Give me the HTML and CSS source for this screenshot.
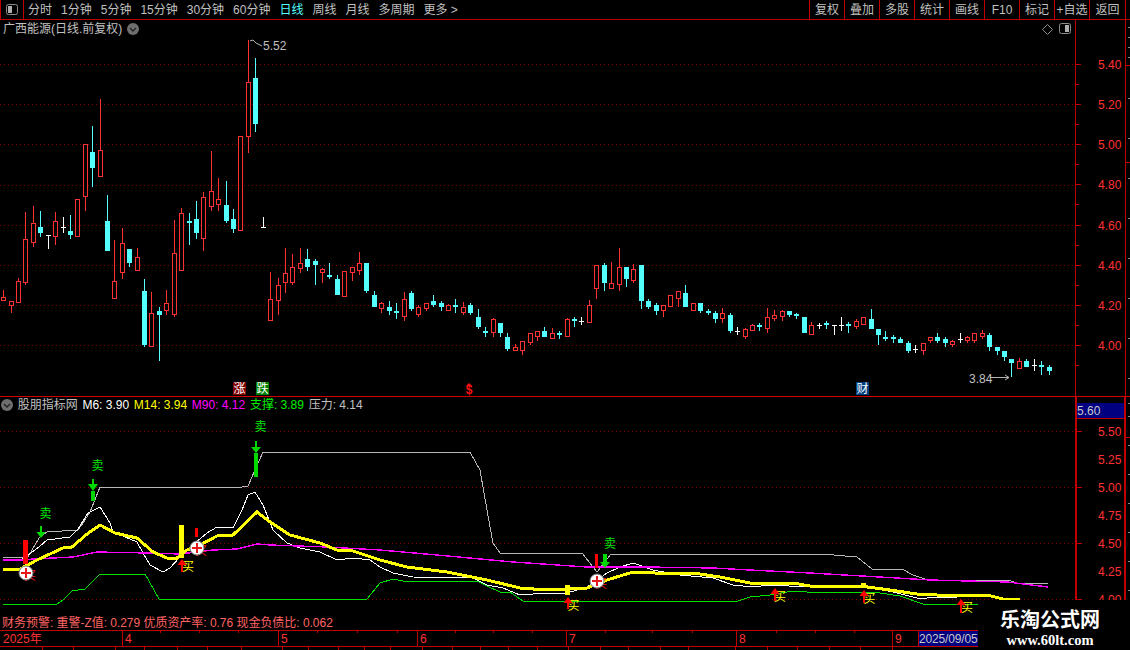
FILE: index.html
```html
<!DOCTYPE html>
<html lang="zh-CN">
<head>
<meta charset="utf-8">
<title>广西能源 日线</title>
<link rel="stylesheet" href="styles.css">
</head>
<body>
<div class="page">
  <header class="toolbar">
    <div class="tb-toggle">
      <svg class="ico" width="13" height="12" viewBox="0 0 13 12"><rect class="ico-box" x="0.5" y="0.5" width="11" height="10" rx="2"/><rect class="ico-bar" x="2" y="2" width="4" height="7"/></svg>
    </div>
    <nav class="periods">
      <span>分时</span><span>1分钟</span><span>5分钟</span><span>15分钟</span><span>30分钟</span><span>60分钟</span><span class="on">日线</span><span>周线</span><span>月线</span><span>多周期</span><span>更多 &gt;</span>
    </nav>
    <nav class="actions">
      <span>复权</span><span>叠加</span><span>多股</span><span>统计</span><span>画线</span><span>F10</span><span>标记</span><span>+自选</span><span class="last">返回</span>
    </nav>
  </header>

  <section class="row row-price">
    <div class="pane">
      <div class="legend">
        <span class="title">广西能源(日线.前复权)</span>
        <svg class="ico-down" width="12" height="12" viewBox="0 0 12 12"><circle cx="6" cy="6" r="6"/><path d="M3 5l3 3 3-3"/></svg>
        <span class="legend-end">
          <svg class="ico" width="11" height="11" viewBox="0 0 11 11"><path class="ico-box" d="M5.5 .5l5 5-5 5-5-5z"/></svg>
          <svg class="ico" width="13" height="12" viewBox="0 0 13 12"><rect class="ico-box" x="0.5" y="0.5" width="11" height="10" rx="2"/><rect class="ico-bar" x="6" y="2" width="4" height="7"/></svg>
        </span>
      </div>
      <svg class="canvas" width="1075" height="376" viewBox="0 20 1075 376">
        <path class="grid" d="M0 64.5H1075M0 104.5H1075M0 144.5H1075M0 185.5H1075M0 225.5H1075M0 265.5H1075M0 305.5H1075M0 345.5H1075"/>
        <path class="wick-red" d="M3.5 290V300M11.5 301V313M18.5 278V303M25.5 212V285M33.5 206V247M55.5 212V245M77.5 199V237M85.5 144V211M100.5 99V176M114.5 240V298M122.5 228V279M137.5 248V271M151.5 292V346M166.5 290V315M174.5 220V317M181.5 208V270M203.5 192V251M211.5 151V211M218.5 178V211M248.5 40V153M270.5 272V320M278.5 278V315M285.5 248V293M292.5 254V285M300.5 248V273M322.5 268V283M352.5 267V281M359.5 252V275M381.5 302V313M404.5 292V321M418.5 305V317M426.5 303V311M448.5 304V310M463.5 302V315M493.5 318V337M515.5 344V351M522.5 341V355M530.5 333V345M537.5 331V341M552.5 328V338M567.5 318V337M589.5 300V322M596.5 265V299M611.5 262V289M619.5 248V291M633.5 264V283M663.5 305V317M678.5 291V307M693.5 303V311M722.5 308V323M745.5 328V339M752.5 324V331M767.5 308V333M774.5 310V321M782.5 310V321M811.5 322V334M856.5 319V329M923.5 343V355M930.5 337V343M952.5 340V347M967.5 336V343M974.5 333V343M982.5 330V339M1019.5 358V369"/>
        <path class="wick-cyan" d="M40.5 211V237M70.5 215V239M92.5 126V187M107.5 195V251M129.5 249V267M144.5 279V347M159.5 307V361M189.5 213V245M196.5 201V239M226.5 181V223M233.5 209V233M255.5 58V132M307.5 249V271M315.5 259V285M329.5 263V279M337.5 275V295M366.5 263V293M374.5 291V307M389.5 301V315M396.5 303V319M411.5 291V311M433.5 295V307M441.5 301V311M455.5 299V313M470.5 303V315M478.5 309V329M485.5 327V337M500.5 323V337M507.5 333V351M544.5 327V337M559.5 331V339M574.5 317V327M604.5 263V291M626.5 267V287M641.5 265V309M648.5 299V309M656.5 303V315M685.5 285V307M700.5 303V313M708.5 309V315M715.5 311V323M730.5 313V333M759.5 323V331M789.5 311V317M796.5 313V319M826.5 321V329M848.5 322V333M871.5 309V329M878.5 329V345M885.5 331V341M893.5 335V343M900.5 337V343M908.5 341V353M937.5 333V343M945.5 337V347M989.5 333V351M997.5 347V355M1004.5 351V361M1011.5 359V377M1026.5 359V367M1041.5 361V375M1049.5 365V375"/>
        <path class="body-red" d="M1.5 297.5h4v3h-4zM9.5 301.5h4v4h-4zM16.5 281.5h4v21h-4zM23.5 239.5h4v43h-4zM31.5 223.5h4v19h-4zM53.5 221.5h4v15h-4zM75.5 199.5h4v37h-4zM83.5 144.5h4v52h-4zM98.5 150.5h4v26h-4zM112.5 281.5h4v17h-4zM120.5 243.5h4v29h-4zM135.5 257.5h4v13h-4zM149.5 313.5h4v33h-4zM164.5 303.5h4v7h-4zM172.5 253.5h4v61h-4zM179.5 213.5h4v57h-4zM201.5 197.5h4v41h-4zM209.5 191.5h4v15h-4zM216.5 199.5h4v5h-4zM238.5 136.5h4v94h-4zM246.5 82.5h4v54h-4zM268.5 299.5h4v21h-4zM276.5 285.5h4v15h-4zM283.5 273.5h4v9h-4zM290.5 267.5h4v15h-4zM298.5 263.5h4v5h-4zM320.5 269.5h4v3h-4zM342.5 271.5h4v25h-4zM350.5 267.5h4v5h-4zM357.5 263.5h4v7h-4zM379.5 303.5h4v5h-4zM402.5 299.5h4v17h-4zM416.5 307.5h4v7h-4zM424.5 303.5h4v5h-4zM446.5 305.5h4v5h-4zM461.5 307.5h4v5h-4zM491.5 319.5h4v13h-4zM513.5 347.5h4v3h-4zM520.5 341.5h4v9h-4zM528.5 333.5h4v9h-4zM535.5 331.5h4v5h-4zM550.5 333.5h4v5h-4zM565.5 319.5h4v17h-4zM587.5 305.5h4v17h-4zM594.5 265.5h4v23h-4zM609.5 283.5h4v5h-4zM617.5 267.5h4v17h-4zM631.5 269.5h4v11h-4zM661.5 305.5h4v5h-4zM668.5 295.5h4v11h-4zM676.5 291.5h4v7h-4zM691.5 303.5h4v7h-4zM720.5 313.5h4v5h-4zM743.5 329.5h4v7h-4zM750.5 325.5h4v5h-4zM765.5 317.5h4v11h-4zM772.5 315.5h4v3h-4zM780.5 311.5h4v5h-4zM809.5 325.5h4v9h-4zM854.5 321.5h4v5h-4zM861.5 317.5h4v7h-4zM921.5 343.5h4v7h-4zM928.5 337.5h4v3h-4zM950.5 341.5h4v3h-4zM965.5 337.5h4v3h-4zM972.5 333.5h4v7h-4zM980.5 333.5h4v3h-4zM1017.5 361.5h4v7h-4z"/>
        <path class="body-cyan" d="M38 227h5v6h-5zM68 231h5v4h-5zM90 152h5v16h-5zM105 221h5v30h-5zM127 249h5v14h-5zM142 291h5v54h-5zM157 311h5v4h-5zM187 221h5v2h-5zM194 219h5v14h-5zM224 205h5v16h-5zM231 219h5v10h-5zM253 78h5v46h-5zM305 259h5v8h-5zM313 261h5v4h-5zM327 275h5v2h-5zM335 279h5v16h-5zM364 263h5v28h-5zM372 295h5v12h-5zM387 307h5v4h-5zM394 311h5v2h-5zM409 293h5v16h-5zM431 301h5v4h-5zM439 303h5v4h-5zM453 305h5v2h-5zM468 305h5v8h-5zM476 317h5v10h-5zM483 331h5v2h-5zM498 323h5v10h-5zM505 337h5v12h-5zM542 331h5v6h-5zM557 333h5v2h-5zM572 319h5v2h-5zM602 265h5v18h-5zM624 267h5v12h-5zM639 265h5v36h-5zM646 301h5v6h-5zM654 305h5v6h-5zM683 293h5v14h-5zM698 303h5v8h-5zM706 311h5v2h-5zM713 313h5v6h-5zM728 315h5v16h-5zM757 325h5v2h-5zM787 311h5v4h-5zM794 314h5v2h-5zM802 317h5v16h-5zM824 323h5v2h-5zM846 324h5v2h-5zM869 319h5v10h-5zM876 329h5v6h-5zM883 337h5v2h-5zM891 337h5v2h-5zM898 339h5v4h-5zM906 343h5v8h-5zM935 337h5v4h-5zM943 339h5v4h-5zM987 335h5v12h-5zM995 347h5v4h-5zM1002 351h5v6h-5zM1009 359h5v4h-5zM1024 361h5v6h-5zM1039 365h5v2h-5zM1047 367h5v4h-5z"/>
        <path class="doji" d="M48.5 235V249M46 235.5h5M63.5 217V233M61 227.5h5M263.5 217V228M261 227.5h5M581.5 317V325M579 321.5h5M737.5 327V335M735 331.5h5M819.5 323V329M817 325.5h5M834.5 325V335M832 325.5h5M841.5 317V331M839 325.5h5M915.5 345V353M913 349.5h5M960.5 333V343M958 339.5h5M1034.5 359V371M1032 365.5h5"/>
        <path class="note-line" d="M250 41l3-1 3 3 6 3M990 377.5H1009M1005 375l4 2.5-4 2.5"/>
        <text class="note" x="263" y="50">5.52</text>
        <text class="note" x="969" y="383">3.84</text>
        <rect class="tag-red" x="233" y="382" width="13" height="13"/>
        <text class="tag" x="239.5" y="393" text-anchor="middle">涨</text>
        <rect class="tag-green" x="256" y="382" width="13" height="13"/>
        <text class="tag" x="262.5" y="393" text-anchor="middle">跌</text>
        <rect class="tag-blue" x="856" y="382" width="13" height="13"/>
        <text class="tag" x="862.5" y="393" text-anchor="middle">财</text>
        <path class="dollar-top" d="M469 383l3 3h-6z"/>
        <text class="dollar" x="469" y="394" text-anchor="middle">$</text>
      </svg>
    </div>
    <div class="axis axis-price">
      <span>5.40</span><span>5.20</span><span>5.00</span><span>4.80</span><span>4.60</span><span>4.40</span><span>4.20</span><span>4.00</span>
    </div>
    <svg class="edge" width="4" height="377" viewBox="0 0 4 377"><path class="edge-gray" d="M2 7h2M2 17h2M2 27h2M2 37h2M2 78h2M2 118h2M2 158h2M2 198h2M2 238h2M2 278h2M2 318h2M2 358h2"/><path class="edge-red" d="M0 45.5h4M0 142.5h4"/></svg>
  </section>

  <section class="row row-ind">
    <div class="ind-col">
      <div class="pane">
        <div class="legend legend-ind">
          <svg class="ico-down" width="12" height="12" viewBox="0 0 12 12"><circle cx="6" cy="6" r="6"/><path d="M3 5l3 3 3-3"/></svg>
          <span class="title">股朋指标网</span>
          <span class="c-white">M6: 3.90</span>
          <span class="c-yellow">M14: 3.94</span>
          <span class="c-magenta">M90: 4.12</span>
          <span class="c-green">支撑: 3.89</span>
          <span class="title">压力: 4.14</span>
        </div>
        <svg class="canvas" width="1075" height="217" viewBox="0 397 1075 217">
          <path class="grid" d="M0 431.5H1075M0 487.5H1075M0 543.5H1075M0 599.5H1075"/>
          <polyline class="l-press" points="3,557 28,557 39,538 47,532 78,530 83,523 90,512 100,487 242,487 248,486 255,470 263,452 470,452 480,470 487,510 493,543 500,553 582,553 597,572 611,554 823,554 845,556 857,557 872,569 902,569 913,575 928,580 1008,580 1017,583 1048,583"/>
          <polyline class="l-m6" points="3,559 22,559 28,555 39,547 47,540 70,537 78,529 88,513 100,507 110,523 113,532 137,542 143,553 150,565 163,572 170,568 180,557 190,547 207,533 217,527 233,528 242,510 248,495 255,492 263,505 273,530 287,543 300,548 320,552 337,560 353,558 370,560 380,567 393,573 413,577 473,578 487,585 503,588 520,595 547,593 567,593 587,587 607,573 620,567 633,563 653,570 680,575 713,578 733,585 753,587 770,585 807,587 863,586 893,592 917,598 927,598 957,597 990,596 1003,599"/>
          <polyline class="l-m90" points="3,560 22,560 33,559 73,557 97,552 147,553 180,554 213,550 237,549 257,544 270,545 327,547 380,550 437,555 513,562 587,567 647,567 713,568 750,570 810,573 897,578 930,580 1007,582 1048,587"/>
          <polyline class="l-sup" points="3,604 57,604 63,600 72,591 85,589 100,574 145,574 159,599 367,599 380,583 393,579 403,581 477,581 487,586 500,592 510,592 523,601 738,601 750,597 770,595 793,591 807,592 873,592 900,596 923,604 978,604"/>
          <polyline class="l-m14" points="3,569 20,569 37,560 63,548 72,547 87,534 100,525 115,533 137,538 153,552 167,558 177,558 187,550 200,545 217,536 233,535 257,512 270,522 290,535 320,543 337,550 353,551 380,560 407,567 447,572 487,580 520,588 547,590 587,588 607,580 633,572 647,572 663,574 693,573 720,577 750,583 770,583 793,583 810,586 860,586 890,590 917,594 957,596 987,595 1003,599 1020,599"/>

          <text class="t-sell" x="45.5" y="518" text-anchor="middle">卖</text>
          <text class="t-sell" x="97.5" y="470" text-anchor="middle">卖</text>
          <text class="t-sell" x="260.5" y="431" text-anchor="middle">卖</text>
          <text class="t-sell" x="610" y="548" text-anchor="middle">卖</text>

          <path class="a-green" d="M40 526h2v6h3.500l-4.500 6-4.500-6h3.500z"/>
          <path class="a-green" d="M92 479h2v5h4l-5 7-5-7h4zM91 491h4v10h-4z"/>
          <path class="a-green" d="M255 441h2v6h4l-5 6-5-6h4zM254 453h4v24h-4z"/>
          <path class="a-green" d="M603 554h4v8h3l-5 6-5-6h3z"/>

          <rect class="b-red" x="23" y="540" width="5" height="24"/>
          <rect class="b-yellow" x="179" y="525" width="5" height="33"/>
          <rect class="b-red" x="195" y="528" width="3" height="9"/>
          <rect class="b-red" x="595" y="554" width="3" height="14"/>
          <rect class="b-yellow" x="565" y="585" width="5" height="10"/>
          <rect class="b-yellow" x="861" y="583" width="5" height="4"/>

          <text class="t-red" x="30" y="580" text-anchor="middle">买</text>
          <text class="t-red" x="201" y="555" text-anchor="middle">买</text>
          <text class="t-red" x="601" y="588" text-anchor="middle">买</text>

          <text class="t-buy" x="188" y="571" text-anchor="middle">买</text>
          <text class="t-buy" x="573.500" y="610" text-anchor="middle">买</text>
          <text class="t-buy" x="780" y="601" text-anchor="middle">买</text>
          <text class="t-buy" x="869.500" y="603" text-anchor="middle">买</text>
          <text class="t-buy" x="967" y="612" text-anchor="middle">买</text>
          <path class="a-red" d="M182 559l4.500 6H183v7h-2v-7h-3.500z"/>
          <path class="a-red" d="M568 597l4.500 6H569v6h-2v-6h-3.500z"/>
          <path class="a-red" d="M775 588l4.500 6H776v7h-2v-7h-3.500z"/>
          <path class="a-red" d="M864 590l4.500 6H865v7h-2v-7h-3.500z"/>
          <path class="a-red" d="M961 599l4.500 6H962v8h-2v-8h-3.500z"/>

          <circle class="plus-disc" cx="26" cy="573" r="7"/><path class="plus-mark" d="M21 572h10v2H21zM25 568h2v10h-2z"/>
          <circle class="plus-disc" cx="197" cy="548" r="7"/><path class="plus-mark" d="M192 547h10v2h-10zM196 543h2v10h-2z"/>
          <circle class="plus-disc" cx="597" cy="581" r="7"/><path class="plus-mark" d="M592 580h10v2h-10zM596 576h2v10h-2z"/>
        </svg>
      </div>
      <p class="fin">财务预警: 重警-Z值: 0.279 优质资产率: 0.76 现金负债比: 0.062</p>
    </div>
    <div class="axis axis-ind">
      <div class="axis-cur">5.60</div>
      <span>5.50</span><span>5.25</span><span>5.00</span><span>4.75</span><span>4.50</span><span>4.25</span><span>4.00</span>
    </div>
    <svg class="edge" width="4" height="233" viewBox="0 0 4 233"><path class="edge-gray" d="M2 6h2M2 19h2M2 48h2M2 77h2M2 106h2M2 135h2M2 164h2M2 193h2M2 222h2"/><path class="edge-red" d="M0 40.5h4"/></svg>
  </section>

  <footer class="timeline">
    <div class="months">
      <span>2025年</span><span>4</span><span>5</span><span>6</span><span>7</span><span>8</span><span>9</span><span class="cur">2025/09/05</span>
    </div>
    <svg class="timeline-ticks" width="1130" height="20" viewBox="0 630 1130 20">
      <path d="M160.500 630v3M199.500 630v3M238.500 630v3M317.500 630v3M357.500 630v3M397.500 630v3M455.500 630v3M493.500 630v3M532.500 630v3M605.500 630v3M652.500 630v3M692.500 630v3M776.500 630v3M815.500 630v3M854.500 630v3M42.500 646v4M73.500 646v4M115.500 646v4M144.500 646v4M177.500 646v4M207.500 646v4M241.500 646v4M282.500 646v4M308.500 646v4M338.500 646v4M364.500 646v4M390.500 646v4M422.500 646v4M452.500 646v4M480.500 646v4M508.500 646v4M537.500 646v4M568.500 646v4M600.500 646v4M628.500 646v4M660.500 646v4M688.500 646v4M735.500 646v4M767.500 646v4M797.500 646v4M829.500 646v4M860.500 646v4M892.500 646v4"/>
    </svg>
  </footer>

  <aside class="watermark">
    <strong class="wm-name">乐淘公式网</strong>
    <span class="wm-url">www.60lt.com</span>
  </aside>
</div>
</body>
</html>
```

FILE: styles.css
```css
* { box-sizing: border-box; }
html, body { margin: 0; padding: 0; background: #000; }
body {
  font-family: "Liberation Sans", "Noto Sans CJK SC", sans-serif;
  font-size: 12px;
  line-height: 14px;
  color: #c0c0c0;
}
.page {
  position: relative;
  width: 1130px;
  height: 650px;
  overflow: hidden;
  display: flex;
  flex-direction: column;
  background: #000;
}

/* toolbar */
.toolbar {
  flex: none;
  height: 20px;
  display: flex;
  align-items: stretch;
  border-bottom: 1px solid #c00000;
}
.tb-toggle {
  width: 24px;
  display: flex;
  align-items: center;
  justify-content: center;
  border-left: 1px solid #c00000;
  border-right: 1px solid #c00000;
}
.periods {
  display: flex;
  align-items: center;
  gap: 9px;
  padding-left: 4px;
  white-space: nowrap;
}
.periods .on { color: #54ffff; }
.actions {
  margin-left: auto;
  display: flex;
  padding-right: 4px;
}
.actions span {
  width: 35px;
  display: flex;
  align-items: center;
  justify-content: center;
  border-left: 1px solid #c00000;
  white-space: nowrap;
}
.actions .last { width: 37px; border-right: 1px solid #c00000; }

/* rows */
.row { flex: none; display: flex; }
.row-price { height: 377px; border-bottom: 1px solid #d00000; }
.row-ind { height: 233px; }
.pane { position: relative; width: 1075px; }
.ind-col { width: 1075px; display: flex; flex-direction: column; }
.canvas { display: block; }
.edge { display: block; flex: none; }
.edge-gray { stroke: #8a8a8a; stroke-width: 1; shape-rendering: crispEdges; }
.edge-red { stroke: #c00000; stroke-width: 1; shape-rendering: crispEdges; }

/* legends */
.legend {
  position: absolute;
  left: 0;
  right: 0;
  top: 2px;
  display: flex;
  align-items: center;
  gap: 5px;
  padding: 0 3px;
  white-space: nowrap;
}
.legend-ind { top: 1px; padding-left: 1px; gap: 4.7px; }
.legend-end { margin-left: auto; display: flex; align-items: center; gap: 6px; }
.title { color: #c0c0c0; }
.c-white { color: #fff; }
.c-yellow { color: #ffff00; }
.c-magenta { color: #ff00ff; }
.c-green { color: #00f000; }
.ico-down circle { fill: #6e6e6e; }
.ico-down path { fill: none; stroke: #222; stroke-width: 1.4; }
.ico { display: block; }
.ico-box { fill: none; stroke: #8c8c8c; stroke-width: 1; }
.ico-bar { fill: #b0b0b0; }

/* chart drawing */
.grid { stroke: #8c0000; stroke-width: 1; stroke-dasharray: 1 3; fill: none; shape-rendering: crispEdges; }
.wick-red { stroke: #ff3232; stroke-width: 1; fill: none; shape-rendering: crispEdges; }
.wick-cyan { stroke: #54ffff; stroke-width: 1; fill: none; shape-rendering: crispEdges; }
.body-red { stroke: #ff3232; stroke-width: 1; fill: #000; shape-rendering: crispEdges; }
.body-cyan { fill: #54ffff; shape-rendering: crispEdges; }
.doji { stroke: #fff; stroke-width: 1; fill: none; shape-rendering: crispEdges; }
.note-line { stroke: #b4b4b4; stroke-width: 1; fill: none; }
.note { fill: #c0c0c0; font-size: 12px; }
.tag { fill: #fff; font-size: 12px; }
.tag-red { fill: #800000; }
.tag-green { fill: #008000; }
.tag-blue { fill: #004080; }
.dollar { fill: #ff1010; font-size: 12px; font-weight: bold; }
.dollar-top { fill: #ff1010; }

.l-press, .l-m6, .l-m90, .l-sup, .l-m14 { fill: none; shape-rendering: crispEdges; }
.l-press { stroke: #b8b8b8; stroke-width: 1; }
.l-m6 { stroke: #fff; stroke-width: 1; }
.l-m90 { stroke: #ff00ff; stroke-width: 1.4; }
.l-sup { stroke: #00e000; stroke-width: 1; }
.l-m14 { stroke: #ffff00; stroke-width: 3; }

.t-sell { fill: #00e600; font-size: 12px; }
.t-buy { fill: #ffff00; font-size: 12px; }
.t-red { fill: #ff1010; font-size: 12px; }
.a-green { fill: #00d800; }
.a-red { fill: #ff0000; }
.b-red { fill: #ff0000; }
.b-yellow { fill: #ffff00; }
.plus-disc { fill: #fff; stroke: #777; stroke-width: 1; }
.plus-mark { fill: #e81818; }

/* financial line */
.fin {
  margin: 0;
  height: 16px;
  padding: 2px 0 0 2px;
  color: #ff6464;
  white-space: nowrap;
  letter-spacing: -0.03px;
}

/* axes */
.axis {
  flex: none;
  width: 51px;
  display: flex;
  flex-direction: column;
  color: #ff3232;
  border-left: 1px solid #c00000;
  border-right: 1px solid #c00000;
}
.axis span {
  position: relative;
  display: block;
  padding-left: 22px;
  height: 14px;
  flex: none;
}
.axis span::before {
  content: "";
  position: absolute;
  left: -1px;
  top: 6px;
  width: 6px;
  height: 1px;
  background: #c00000;
}
.axis-price { padding-top: 38px; gap: 26.14px; }
.axis-price span::after {
  content: "";
  position: absolute;
  left: 0;
  top: 26px;
  width: 3px;
  height: 1px;
  background: #c00000;
}
.axis-ind {
  gap: 14px;
  border-left-width: 2px;
  border-right-width: 2px;
  overflow: hidden;
}
.axis-ind span { padding-left: 21px; }
.axis-ind span:nth-of-type(even)::before { display: none; }
.axis-cur {
  flex: none;
  height: 16px;
  margin: 6px 0 -8px 0;
  background: #000080;
  color: #c8c8c8;
  padding-top: 1px;
  border-bottom: 1px solid #c00000;
}

/* timeline */
.timeline {
  position: relative;
  flex: none;
  height: 20px;
}
.months {
  display: grid;
  grid-template-columns: 122px 156px 139px 149px 170px 156px 26px 60px;
  height: 17px;
  line-height: 16px;
  border-top: 1px solid #c00000;
  border-bottom: 1px solid #c00000;
  color: #ff3232;
}
.months span { padding-left: 2px; border-left: 1px solid #c00000; white-space: nowrap; overflow: hidden; }
.months span:first-child { border-left: 0; padding-left: 3px; }
.months .cur { background: #000080; color: #c8c8c8; padding-left: 0; letter-spacing: -0.15px; }
.timeline-ticks {
  position: absolute;
  left: 0;
  top: 0;
  stroke: #c00000;
  stroke-width: 1;
  shape-rendering: crispEdges;
}

/* watermark */
.watermark {
  position: absolute;
  right: 0;
  bottom: 0;
  width: 152px;
  height: 50px;
  background: #000;
  display: flex;
  flex-direction: column;
  align-items: center;
  padding: 7px 8px 0 0;
  gap: 2px;
  color: #fff;
}
.wm-name { font-size: 20px; line-height: 24px; font-weight: 700; font-family: "Noto Sans CJK SC", sans-serif; }
.wm-url { font-family: "Liberation Serif", serif; font-weight: 700; font-size: 14.5px; line-height: 15px; }
```
